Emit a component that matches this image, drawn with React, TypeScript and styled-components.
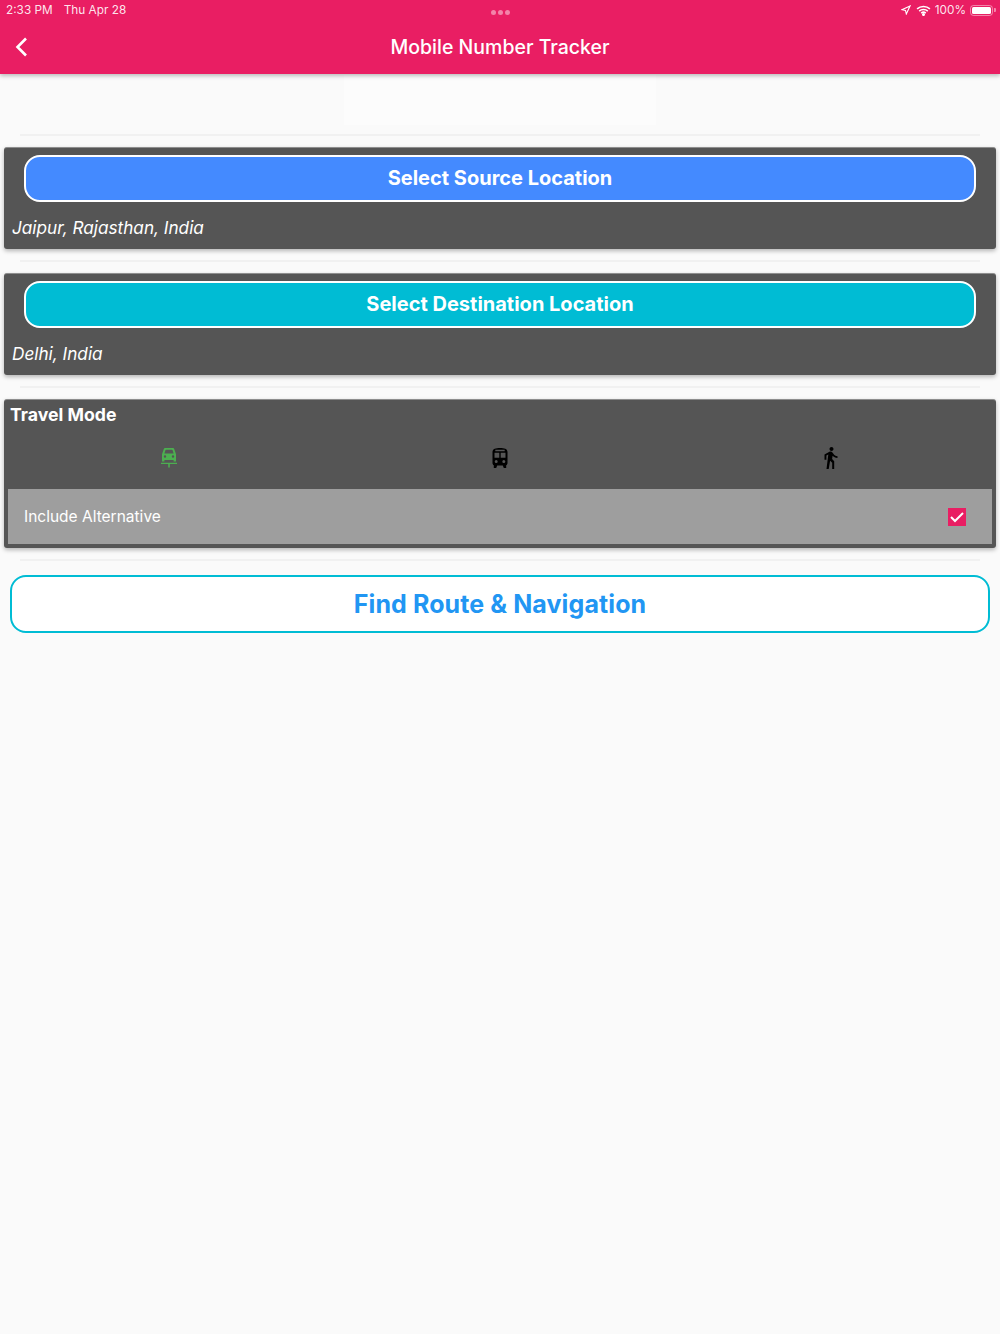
import styled, { createGlobalStyle } from "styled-components";

const GlobalStyle = createGlobalStyle`
  html, body {
    margin: 0;
    padding: 0;
    background: #fafafa;
    font-family: Inter, "Liberation Sans", sans-serif;
  }
`;

const Page = styled.div`
  width: 1000px;
  height: 1334px;
  overflow: hidden;
  background: #fafafa;
`;

const Header = styled.header`
  position: relative;
  z-index: 1;
  height: 74px;
  background: #e91e63;
  color: #fff;
  box-shadow: 0 2px 4px rgba(0, 0, 0, 0.25);
  display: flex;
  flex-direction: column;
`;

const StatusBar = styled.div`
  height: 20px;
  padding: 0 7px 0 6px;
  display: flex;
  align-items: center;
  justify-content: space-between;
  font-size: 11.8px;
  color: rgba(255, 255, 255, 0.9);
`;

const StatusGroup = styled.div<{ $gap: number }>`
  display: flex;
  align-items: center;
  gap: ${(p) => p.$gap}px;
`;

const Multitask = styled.div`
  display: flex;
  gap: 2px;
  margin-top: 5px;
  margin-left: -26px;
`;

const Dot = styled.span`
  width: 5px;
  height: 5px;
  border-radius: 50%;
  background: rgba(255, 255, 255, 0.45);
`;

const LocationArrow = styled.svg`
  margin-right: 1px;
`;

const Battery = styled.div`
  width: 23px;
  height: 11px;
  box-sizing: border-box;
  padding: 1px;
  border: 1px solid rgba(255, 255, 255, 0.45);
  border-radius: 3.5px;
  position: relative;

  &::before {
    content: "";
    display: block;
    height: 100%;
    border-radius: 1.5px;
    background: #fff;
  }

  &::after {
    content: "";
    position: absolute;
    right: -3.5px;
    top: 2.5px;
    width: 2px;
    height: 4px;
    border-radius: 0 1px 1px 0;
    background: rgba(255, 255, 255, 0.45);
  }
`;

const TitleRow = styled.div`
  flex: 1;
  position: relative;
  display: flex;
  align-items: center;
  justify-content: center;
`;

const BackIcon = styled.svg`
  position: absolute;
  left: 15px;
  top: 17px;
`;

const Title = styled.h1`
  margin: 0;
  font-size: 19.5px;
  font-weight: 500;
  line-height: 24px;
`;

const Content = styled.main`
  display: flex;
  flex-direction: column;
  padding-top: 1px;
`;

const AdSlot = styled.div`
  width: 312px;
  height: 50px;
  margin: 0 auto;
  background: #fcfcfc;
`;

const Divider = styled.hr`
  height: 2px;
  border: 0;
  margin: 11px 20px;
  background: #f1f1f1;
  flex: none;
`;

const TopDivider = styled(Divider)`
  margin-top: 9px;
`;

const Card = styled.section`
  margin: 0 4px;
  background: #555555;
  border-radius: 3px;
  border-top: 1px solid #8e8e8e;
  box-shadow: 0 2px 4px rgba(0, 0, 0, 0.28);
`;

const LocationCard = styled(Card)`
  height: 102px;
  box-sizing: border-box;
  padding: 7px 20px 0;
`;

const SelectButton = styled.button<{ $color: string }>`
  display: block;
  width: 100%;
  height: 47px;
  box-sizing: border-box;
  border: 2px solid #fff;
  border-radius: 16px;
  background: ${(p) => p.$color};
  color: #fff;
  font-family: inherit;
  font-size: 20px;
  font-weight: 700;
  padding: 0 0 1px;
`;

const Place = styled.p`
  margin: 14px 0 0 -12px;
  color: #fff;
  font-size: 17.2px;
  font-style: italic;
  line-height: 24px;
`;

const TravelCard = styled(Card)`
  height: 149px;
  box-sizing: border-box;
  padding: 0 4px;
`;

const CardTitle = styled.h2`
  margin: 0;
  padding: 3px 2px 0;
  color: #fff;
  font-size: 17.7px;
  font-weight: 700;
  line-height: 24px;
`;

const Modes = styled.div`
  height: 62px;
  margin: 0 -4px;
  display: grid;
  grid-template-columns: repeat(3, 1fr);
  place-items: center;
`;

const Alternative = styled.label`
  height: 55px;
  padding: 0 26px 0 16px;
  display: flex;
  align-items: center;
  justify-content: space-between;
  background: #9e9e9e;
  color: #fff;
  font-size: 15.5px;
`;

const CheckBox = styled.span`
  width: 18px;
  height: 18px;
  background: #e91e63;
  display: flex;
  align-items: center;
  justify-content: center;
`;

const FindButton = styled.button`
  display: block;
  width: 980px;
  height: 58px;
  margin: 3px 10px 0;
  box-sizing: border-box;
  border: 2px solid #00bcd4;
  border-radius: 16px;
  background: #fff;
  color: #2196f3;
  font-family: inherit;
  font-size: 25px;
  font-weight: 700;
  letter-spacing: 0.1px;
  padding: 0;
`;

function CarIcon() {
  return (
    <svg width="24" height="24" viewBox="0 0 24 24" fill="#4caf50">
      <path d="M8.500 2h7c1 0 1.500.5 1.800 1.300L19 8.300v7.200h-2.400V14H7.400v1.500H5V8.300l1.700-5C7 2.500 7.500 2 8.500 2zM7.400 7.500h9.200l-1-3.300c-.1-.3-.3-.5-.7-.5H9.100c-.4 0-.6.2-.7.5l-1 3.300zM8 9.300a1.200 1.200 0 1 0 0 2.400 1.200 1.200 0 0 0 0-2.400zm8 0a1.200 1.200 0 1 0 0 2.400 1.200 1.200 0 0 0 0-2.400z" />
      <path d="M4 16.700h16V18h-7.200v3.500h-1.600V18H4z" />
    </svg>
  );
}

function TrainIcon() {
  return (
    <svg width="24" height="24" viewBox="0 0 24 24" fill="#000">
      <path d="M4.500 6c0-3.300 3.300-4 7.500-4s7.500.7 7.500 4v11c0 1-.5 1.900-1.300 2.300V22h-2.400l-1-2.500H9.200l-1 2.500H5.800v-2.700C5 18.900 4.500 18 4.500 17V6zm2 .8v5h4.800V6.800H6.500zm6.200 0v5h4.800V6.800h-4.800zM7.300 3.800v1.500h9.400V3.800H7.300zm.9 10.200a1.500 1.500 0 1 0 0 3 1.500 1.500 0 0 0 0-3zm7.600 0a1.500 1.500 0 1 0 0 3 1.500 1.500 0 0 0 0-3z" />
    </svg>
  );
}

function WalkIcon() {
  return (
    <svg width="24" height="24" viewBox="0 0 24 24" fill="#000">
      <path d="M12.500 5c1.100 0 2-.9 2-2s-.9-2-2-2-2 .9-2 2 .9 2 2 2zM9.300 8.500L7.500 23h2.200l1.400-8.300 2.100 2.100V23h2v-7.700l-2.100-2.300.5-3.200c1 1.200 2.800 2.200 4.900 2.200v-1.800c-1.900 0-3.300-1-4.100-2.400l-1-1.400c-.4-.6-1-1-1.700-1-.3 0-.5.100-.8.100L5.500 8.500v5.300h1.900V9.600l1.900-1.100" />
    </svg>
  );
}

export default function App() {
  return (
    <Page>
      <GlobalStyle />
      <Header>
        <StatusBar>
          <StatusGroup $gap={11}>
            <span>2:33 PM</span>
            <span>Thu Apr 28</span>
          </StatusGroup>
          <Multitask>
            <Dot />
            <Dot />
            <Dot />
          </Multitask>
          <StatusGroup $gap={4}>
            <LocationArrow width="10" height="10" viewBox="0 0 10 10" fill="none" stroke="#fff" strokeWidth="1.100">
              <path d="M9 1L1 4.700l3.500.8.800 3.500z" />
            </LocationArrow>
            <svg width="15" height="11" viewBox="0 0 16 12" fill="none" stroke="#fff" strokeWidth="1.700">
              <path d="M1 4.200c3.900-3.400 10.100-3.400 14 0M3.300 6.600c2.600-2.300 6.800-2.300 9.400 0M5.500 8.800c1.400-1.100 3.600-1.100 5 0" />
              <circle cx="8" cy="10.400" r=".8" fill="#fff" />
            </svg>
            <span>100%</span>
            <Battery />
          </StatusGroup>
        </StatusBar>
        <TitleRow>
          <BackIcon width="14" height="20" viewBox="0 0 14 20" fill="none" stroke="#fff" strokeWidth="2.600">
            <path d="M11 1.500L2.500 10l8.500 8.500" />
          </BackIcon>
          <Title>Mobile Number Tracker</Title>
        </TitleRow>
      </Header>
      <Content>
        <AdSlot />
        <TopDivider />
        <LocationCard>
          <SelectButton $color="#448aff">Select Source Location</SelectButton>
          <Place>Jaipur, Rajasthan, India</Place>
        </LocationCard>
        <Divider />
        <LocationCard>
          <SelectButton $color="#00bcd4">Select Destination Location</SelectButton>
          <Place>Delhi, India</Place>
        </LocationCard>
        <Divider />
        <TravelCard>
          <CardTitle>Travel Mode</CardTitle>
          <Modes>
            <CarIcon />
            <TrainIcon />
            <WalkIcon />
          </Modes>
          <Alternative>
            Include Alternative
            <CheckBox>
              <svg width="14" height="12" viewBox="0 0 14 12" fill="none" stroke="#fff" strokeWidth="2">
                <path d="M1 6l4 4 8-8" />
              </svg>
            </CheckBox>
          </Alternative>
        </TravelCard>
        <Divider />
        <FindButton>Find Route &amp; Navigation</FindButton>
      </Content>
    </Page>
  );
}
